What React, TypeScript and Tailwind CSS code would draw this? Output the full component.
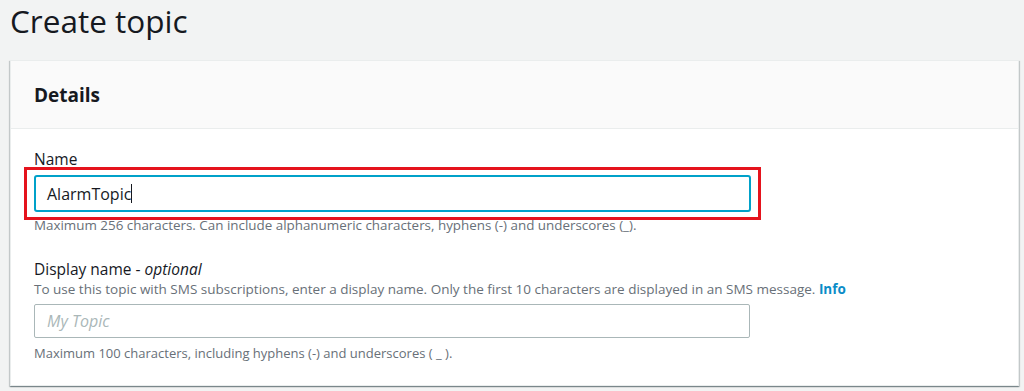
const FONT = { fontFamily: "'Open Sans', Lato, Arial, sans-serif" };

export default function App() {
  return (
    <div className="w-[1024px] h-[391px] overflow-hidden bg-[#f2f3f3] text-[#16191f]" style={FONT}>
      <h1 className="pl-[10px] pt-[1px] text-[31.5px] leading-[40px] font-normal">Create topic</h1>

      <div className="mt-[19px] ml-[10px] mr-[5px] bg-white border border-[#eaeded] shadow-[0_1px_1px_0_rgba(0,28,36,0.3),1px_1px_1px_0_rgba(0,28,36,0.15),-1px_1px_1px_0_rgba(0,28,36,0.15)]">
        <div className="h-[68px] flex items-center px-[23px] bg-[#fafafa] border-b border-[#eaeded]">
          <h2 className="text-[19px] font-bold leading-[22px]">Details</h2>
        </div>

        <div className="px-[23px] pt-[20px] pb-[23px]">
          <label className="block text-[15.5px] leading-[20px]">Name</label>
          <div className="relative mt-[6px] w-[717px]">
            <div className="h-[37px] flex items-center px-[11px] border-2 border-[#00a1c9] rounded-[3px] text-[16px]">
              AlarmTopic
              <span className="inline-block w-px h-[19px] bg-[#16191f]" />
            </div>
            <div className="absolute -left-[10px] -top-[8px] -right-[10px] -bottom-[8px] border-[3px] border-[#e5131d]" />
          </div>
          <p className="mt-[4px] text-[13.4px] leading-[18px] text-[#687078]">
            Maximum 256 characters. Can include alphanumeric characters, hyphens (-) and underscores (_).
          </p>

          <label className="block mt-[25px] text-[15.5px] leading-[20px]">
            Display name - <i>optional</i>
          </label>
          <p className="mt-[1px] text-[13.5px] leading-[18px] text-[#687078]">
            To use this topic with SMS subscriptions, enter a display name. Only the first 10 characters are displayed in an SMS message.{" "}
            <span className="font-bold text-[#0a8cc8]">Info</span>
          </p>
          <div className="mt-[6px] w-[716px] h-[34px] flex items-center px-[12px] border border-[#aab7b8] rounded-[2px] text-[16px] italic text-[#aab7b8]">
            My Topic
          </div>
          <p className="mt-[6px] text-[13px] leading-[18px] text-[#687078]">
            Maximum 100 characters, including hyphens (-) and underscores ( _ ).
          </p>
        </div>
      </div>
    </div>
  );
}
